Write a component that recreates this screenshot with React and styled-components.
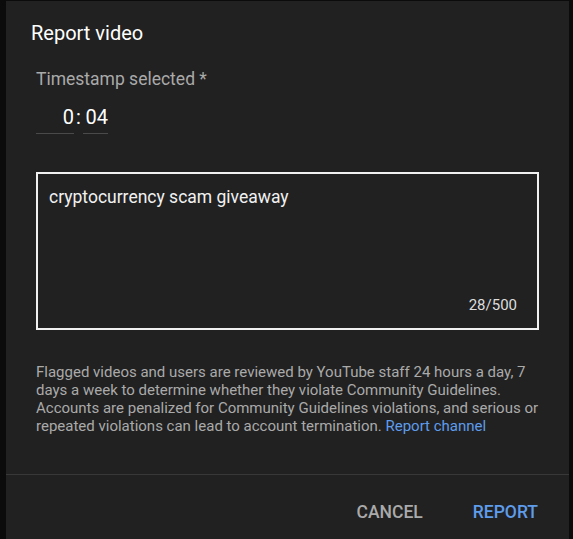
import React from 'react'
import styled, { createGlobalStyle } from 'styled-components'

const GlobalStyle = createGlobalStyle`
  body {
    margin: 0;
    background: #0b0b0b;
    font-family: Roboto, "Liberation Sans", Arial, sans-serif;
  }
`

const Page = styled.div`
  height: 539px;
  overflow: hidden;
  padding: 1px 4px 0 6px;
`

const Dialog = styled.div`
  width: 563px;
  min-height: 560px;
  background: #212121;
  display: flex;
  flex-direction: column;
`

const Title = styled.h2`
  margin: 0;
  padding: 20px 0 0 25px;
  font-size: 20px;
  line-height: 24px;
  font-weight: 400;
  color: #fff;
`

const Body = styled.div`
  padding: 24px 30px 0 30px;
  display: flex;
  flex-direction: column;
`

const Label = styled.div`
  font-size: 17.5px;
  line-height: 20px;
  color: #aaa;
`

const TimeRow = styled.div`
  display: flex;
  align-items: flex-start;
  margin-top: 16px;
  font-size: 20px;
  line-height: 24px;
  color: #fff;
`

const TimeField = styled.div`
  width: ${p => p.$width}px;
  height: 28px;
  text-align: right;
  border-bottom: 1px solid #4a4a4a;
`

const Colon = styled.span`
  width: 9px;
  text-align: center;
`

const TextBox = styled.div`
  margin-top: 38px;
  height: 158px;
  box-sizing: border-box;
  border: 2px solid #f1f1f1;
  padding: 13px 20px 13px 11px;
  display: flex;
  flex-direction: column;
  justify-content: space-between;
`

const Input = styled.div`
  font-size: 17.5px;
  line-height: 20px;
  color: #f1f1f1;
`

const Counter = styled.div`
  align-self: flex-end;
  font-size: 15px;
  line-height: 20px;
  color: #ddd;
`

const Notice = styled.p`
  margin: 33px 0 0;
  font-size: 15px;
  line-height: 18px;
  color: #aaa;
`

const Link = styled.a`
  color: #5e9cec;
  text-decoration: none;
`

const Footer = styled.div`
  margin-top: 39px;
  border-top: 1px solid #383838;
  padding: 19px 19px 0 0;
  display: flex;
  justify-content: flex-end;
  gap: 26px;
`

const Button = styled.button`
  background: none;
  border: none;
  height: 36px;
  padding: 0 12px;
  font-family: inherit;
  font-size: 17.5px;
  line-height: 36px;
  font-weight: 500;
  text-transform: uppercase;
  color: ${p => (p.$primary ? '#5e9cec' : '#aaa')};
  cursor: pointer;
`

export default function App() {
  return (
    <Page>
      <GlobalStyle />
      <Dialog>
        <Title>Report video</Title>
        <Body>
          <Label>Timestamp selected *</Label>
          <TimeRow>
            <TimeField $width={38}>0</TimeField>
            <Colon>:</Colon>
            <TimeField $width={25}>04</TimeField>
          </TimeRow>
          <TextBox>
            <Input>cryptocurrency scam giveaway</Input>
            <Counter>28/500</Counter>
          </TextBox>
          <Notice>
            Flagged videos and users are reviewed by YouTube staff 24 hours a day, 7 days a week to
            determine whether they violate Community Guidelines. Accounts are penalized for Community
            Guidelines violations, and serious or repeated violations can lead to account
            termination. <Link href="#">Report channel</Link>
          </Notice>
        </Body>
        <Footer>
          <Button>Cancel</Button>
          <Button $primary>Report</Button>
        </Footer>
      </Dialog>
    </Page>
  )
}
